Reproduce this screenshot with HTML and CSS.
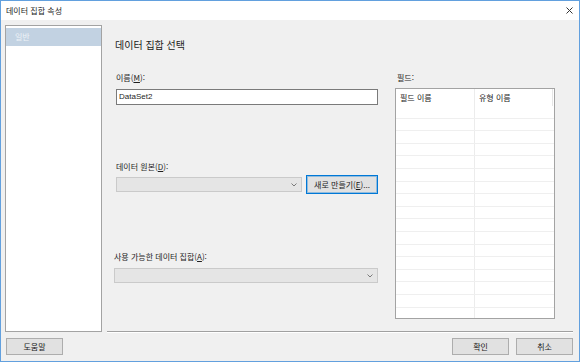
FILE: index.html
```html
<!DOCTYPE html>
<html lang="ko">
<head>
<meta charset="utf-8">
<title>데이터 집합 속성</title>
<link rel="stylesheet" href="styles.css">
</head>
<body>
<div class="window">
  <div class="titlebar">
    <span class="title">데이터 집합 속성</span>
    <svg class="close" width="7" height="7" viewBox="0 0 7 7"><path d="M0.5 0.5L6.5 6.5M6.5 0.5L0.5 6.5" stroke="#333" stroke-width="1"/></svg>
  </div>
  <div class="body">
    <div class="main">
      <div class="sidebar">
        <div class="nav-item selected">일반</div>
      </div>
      <div class="content">
        <div class="page">
          <h1 class="heading">데이터 집합 선택</h1>
          <div class="columns">
            <div class="left-col">
              <div class="group indent">
                <div class="label">이름(<u>M</u>):</div>
                <div class="textbox">DataSet2</div>
              </div>
              <div class="group indent g2">
                <div class="label">데이터 원본(<u>D</u>):</div>
                <div class="row">
                  <div class="select short">
                    <svg class="chev" width="6" height="4" viewBox="0 0 6 4"><path d="M0.5 0.5L3 3L5.5 0.5" fill="none" stroke="#7a7a7a" stroke-width="1"/></svg>
                  </div>
                  <button class="btn new">새로 만들기(<u>E</u>)...</button>
                </div>
              </div>
              <div class="group g3">
                <div class="label">사용 가능한 데이터 집합(<u>A</u>):</div>
                <div class="select full">
                  <svg class="chev" width="6" height="4" viewBox="0 0 6 4"><path d="M0.5 0.5L3 3L5.5 0.5" fill="none" stroke="#7a7a7a" stroke-width="1"/></svg>
                </div>
              </div>
            </div>
            <div class="right-col">
              <div class="label indent">필드:</div>
              <div class="grid">
                <div class="grid-head"><div class="cell c1">필드 이름</div><div class="cell c2">유형 이름</div></div>
                <div class="grid-row"><div class="cell c1"></div><div class="cell c2"></div></div>
                <div class="grid-row"><div class="cell c1"></div><div class="cell c2"></div></div>
                <div class="grid-row"><div class="cell c1"></div><div class="cell c2"></div></div>
                <div class="grid-row"><div class="cell c1"></div><div class="cell c2"></div></div>
                <div class="grid-row"><div class="cell c1"></div><div class="cell c2"></div></div>
                <div class="grid-row"><div class="cell c1"></div><div class="cell c2"></div></div>
                <div class="grid-row"><div class="cell c1"></div><div class="cell c2"></div></div>
                <div class="grid-row"><div class="cell c1"></div><div class="cell c2"></div></div>
                <div class="grid-row"><div class="cell c1"></div><div class="cell c2"></div></div>
                <div class="grid-row"><div class="cell c1"></div><div class="cell c2"></div></div>
                <div class="grid-row"><div class="cell c1"></div><div class="cell c2"></div></div>
                <div class="grid-row"><div class="cell c1"></div><div class="cell c2"></div></div>
                <div class="grid-row"><div class="cell c1"></div><div class="cell c2"></div></div>
                <div class="grid-row"><div class="cell c1"></div><div class="cell c2"></div></div>
                <div class="grid-row"><div class="cell c1"></div><div class="cell c2"></div></div>
                <div class="grid-row"><div class="cell c1"></div><div class="cell c2"></div></div>
                <div class="grid-row last"><div class="cell c1"></div><div class="cell c2"></div></div>
              </div>
            </div>
          </div>
        </div>
        <div class="separator"></div>
      </div>
    </div>
    <div class="footer">
      <button class="btn foot">도움말</button>
      <button class="btn foot push">확인</button>
      <button class="btn foot">취소</button>
    </div>
  </div>
</div>
</body>
</html>
```
FILE: styles.css
```css
html, body {
  margin: 0;
  padding: 0;
}
body {
  width: 580px;
  height: 362px;
  overflow: hidden;
  font-family: "Noto Sans CJK KR", "Noto Sans", sans-serif;
  font-size: 8px;
  color: #1e1e1e;
}
.window {
  box-sizing: border-box;
  width: 580px;
  height: 362px;
  border: 1px solid #62a0de;
  display: flex;
  flex-direction: column;
  background: #f0f0f0;
}
.titlebar {
  flex: none;
  height: 19px;
  background: #fff;
  display: flex;
  align-items: center;
  padding: 0 6px 0 5px;
}
.title {
  font-size: 8px;
  line-height: 19px;
  color: #1a1a1a;
}
.close {
  margin-left: auto;
  display: block;
}
.body {
  flex: 1;
  display: flex;
  flex-direction: column;
}
.main {
  display: flex;
  height: 307px;
  margin-top: 5px;
}
.sidebar {
  box-sizing: border-box;
  width: 97px;
  margin-left: 4px;
  border: 1px solid #a3a3a3;
  background: #fff;
}
.nav-item {
  height: 18px;
  margin-top: 2px;
  line-height: 18px;
  padding-left: 9px;
  font-size: 8px;
}
.nav-item.selected {
  background: #c2d2e2;
  color: #eef2f7;
}
.content {
  flex: 1;
  display: flex;
  flex-direction: column;
  margin-left: 5px;
  margin-right: 6px;
}
.page {
  flex: 1;
}
.heading {
  margin: 13px 0 0 8px;
  font-size: 10px;
  line-height: 14px;
  font-weight: normal;
  color: #1a1a1a;
}
.columns {
  display: flex;
  margin-top: 20px;
  margin-left: 7px;
}
.left-col {
  width: 264px;
}
.indent {
  padding-left: 2px;
}
.label {
  height: 12px;
  line-height: 12px;
  white-space: nowrap;
}
.label u {
  text-underline-offset: 1px;
}
.textbox {
  box-sizing: border-box;
  margin-top: 5px;
  height: 16px;
  border: 1px solid #7a7a7a;
  background: #fff;
  padding-left: 2px;
  font-family: "Liberation Sans", Arial, sans-serif;
  font-size: 8px;
  line-height: 14px;
}
.g2 {
  margin-top: 56px;
}
.row {
  display: flex;
  align-items: center;
  gap: 4px;
  height: 19px;
  margin-top: 2px;
}
.select {
  box-sizing: border-box;
  height: 15px;
  border: 1px solid #cacaca;
  background: #e5e5e5;
  display: flex;
  align-items: center;
  justify-content: flex-end;
  padding-right: 4px;
}
.select.short {
  width: 186px;
}
.select.full {
  margin-top: 5px;
  width: 264px;
}
.chev {
  display: block;
}
.btn {
  box-sizing: border-box;
  margin: 0;
  padding: 0;
  background: #e1e1e1;
  border: 1px solid #adadad;
  font-family: "Noto Sans CJK KR", "Noto Sans", sans-serif;
  font-size: 8px;
  color: #1a1a1a;
  line-height: 1;
}
.btn.new {
  width: 72px;
  height: 19px;
  border-color: #0078d7;
  box-shadow: inset 0 0 0 1px rgba(0, 120, 215, 0.35);
}
.g3 {
  margin-top: 57px;
}
.right-col {
  width: 160px;
  margin-left: 17px;
}
.grid {
  box-sizing: border-box;
  margin-top: 4px;
  height: 231px;
  border: 1px solid #a3a3a3;
  background: #fff;
  overflow: hidden;
}
.grid-head, .grid-row {
  display: flex;
}
.grid-head {
  height: 17px;
}
.grid-row {
  box-sizing: border-box;
  height: 12.6px;
  border-bottom: 1px solid #efefef;
}
.cell {
  box-sizing: border-box;
  height: 100%;
}
.c1 {
  width: 79px;
  border-right: 1px solid #ececec;
}
.c2 {
  width: 78px;
  border-right: 1px solid #e6e6e6;
}
.grid-row .c2 {
  border-right: none;
}
.grid-head .cell {
  line-height: 17px;
  padding-left: 4px;
  color: #222;
}
.separator {
  height: 0;
  border-top: 1px solid #a0a0a0;
  border-bottom: 1px solid #fff;
  margin-bottom: -1px;
}
.footer {
  display: flex;
  gap: 7px;
  padding: 6px 6px 0 5px;
}
.btn.foot {
  width: 57px;
  height: 17px;
}
.push {
  margin-left: auto;
}
```
